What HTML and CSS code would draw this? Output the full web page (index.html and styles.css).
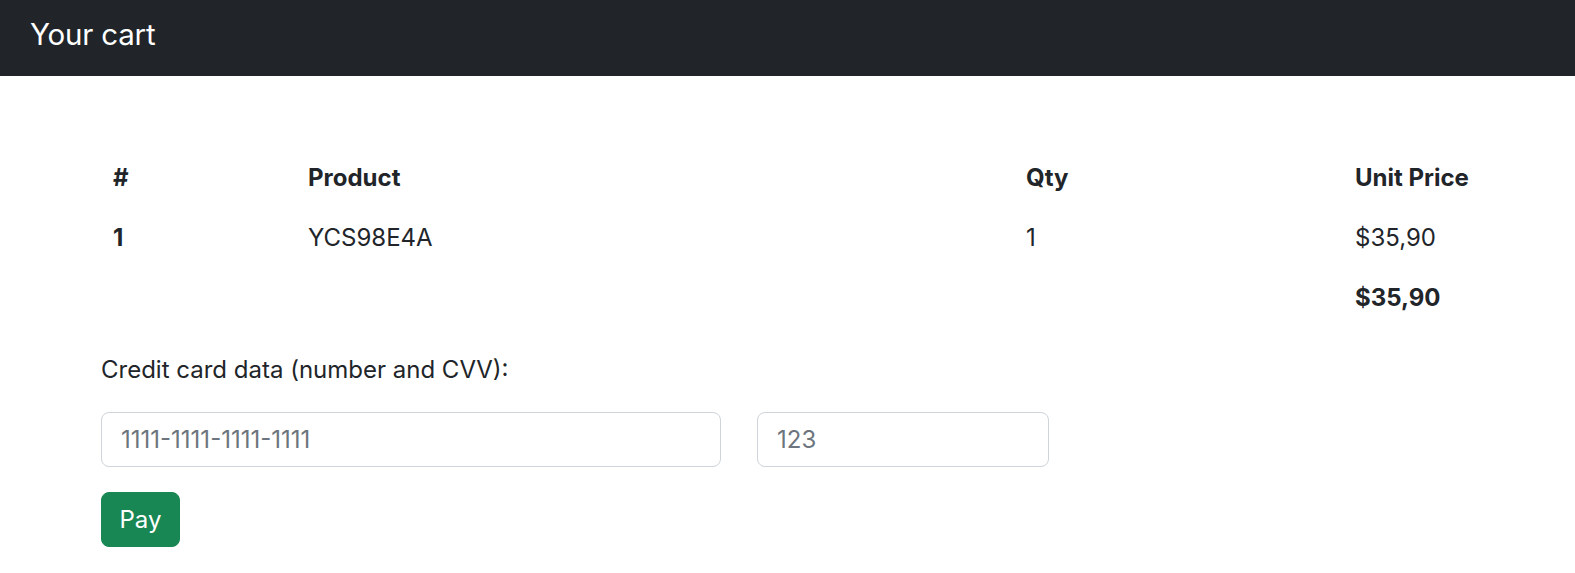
FILE: index.html
```html
<!DOCTYPE html>
<html lang="en">
<head>
<meta charset="utf-8">
<title>Your cart</title>
<link rel="stylesheet" href="styles.css">
</head>
<body>
<header class="navbar">
  <span class="brand">Your cart</span>
</header>
<main class="main">
  <table class="cart">
    <colgroup>
      <col class="c-num"><col class="c-prod"><col class="c-qty"><col class="c-price">
    </colgroup>
    <thead>
      <tr><th>#</th><th>Product</th><th>Qty</th><th>Unit Price</th></tr>
    </thead>
    <tbody>
      <tr><th>1</th><td>YCS98E4A</td><td>1</td><td>$35,90</td></tr>
      <tr><td></td><td></td><td></td><td class="total">$35,90</td></tr>
    </tbody>
  </table>
  <form class="pay-form">
    <label class="label" for="cc">Credit card data (number and CVV):</label>
    <div class="fields">
      <input id="cc" class="control control-number" type="text" placeholder="1111-1111-1111-1111">
      <input class="control control-cvv" type="text" placeholder="123">
    </div>
    <button class="btn-pay" type="button">Pay</button>
  </form>
</main>
</body>
</html>
```
FILE: styles.css
```css
* { box-sizing: border-box; }
html, body { margin: 0; padding: 0; }
body {
  font-family: Inter, "Noto Sans", "Liberation Sans", sans-serif;
  font-size: 24px;
  line-height: 36px;
  color: #212529;
  background: #fff;
}
.navbar {
  height: 76px;
  background: #212529;
  padding: 16px 30px 0;
}
.brand {
  display: block;
  color: #fff;
  font-size: 29.5px;
  line-height: 36px;
  letter-spacing: -0.2px;
}
.main {
  padding: 72px 0 0 101px;
}
.cart {
  border-collapse: collapse;
  table-layout: fixed;
  width: 1392px;
  margin-bottom: 24px;
}
.c-num { width: 195px; }
.c-prod { width: 718px; }
.c-qty { width: 329px; }
.c-price { width: 150px; }
.cart th, .cart td {
  padding: 12px;
  text-align: left;
  vertical-align: top;
  height: 60px;
}
.cart th { font-weight: 700; }
.cart .total { font-weight: 700; }
.pay-form { display: flex; flex-direction: column; align-items: flex-start; }
.label { display: block; margin-bottom: 24px; }
.fields { display: flex; gap: 36px; margin-bottom: 25px; }
.control {
  height: 55px;
  border: 1px solid #ced4da;
  border-radius: 8px;
  padding: 0 19px;
  font-family: inherit;
  font-size: 24px;
  color: #212529;
  background: #fff;
  outline: none;
}
.control::placeholder { color: #6c757d; opacity: 1; }
.control-number { width: 620px; }
.control-cvv { width: 292px; }
.btn-pay {
  height: 55px;
  width: 79px;
  padding: 0;
  border: 1px solid #198754;
  border-radius: 8px;
  background: #198754;
  color: #fff;
  font-family: inherit;
  font-size: 24px;
  cursor: pointer;
}
```
